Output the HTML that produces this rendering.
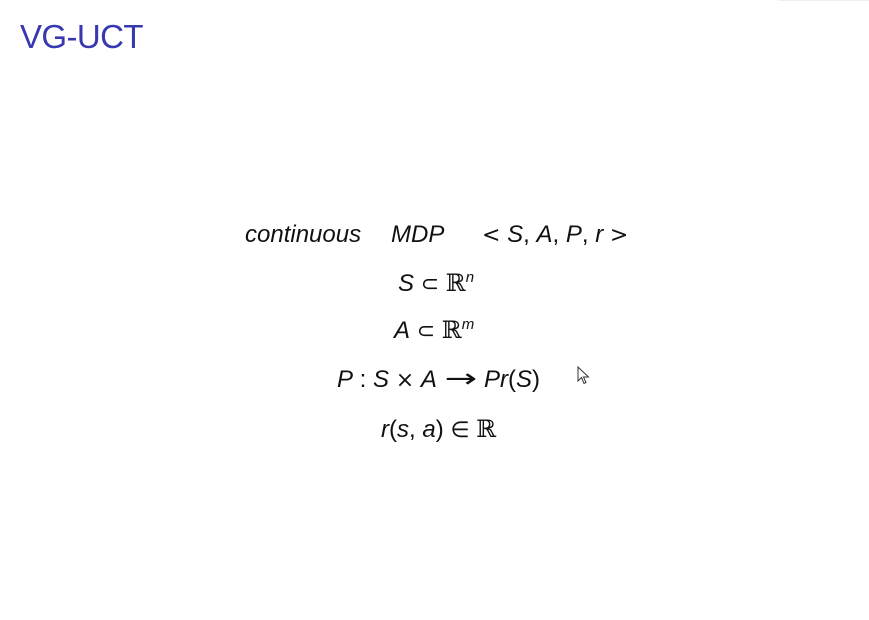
<!DOCTYPE html>
<html><head><meta charset="utf-8"><style>
html,body{margin:0;padding:0;background:#fff;width:869px;height:620px;overflow:hidden;position:relative}
.t{position:absolute;left:20px;top:17px;font-family:"Liberation Sans",sans-serif;font-size:33px;color:#3838b0;line-height:40px;letter-spacing:-0.6px}
.m{position:absolute;font-family:"Liberation Sans",sans-serif;font-size:24px;line-height:24px;color:#111;white-space:nowrap}
i{font-style:italic}
.s{font-family:"DejaVu Sans",sans-serif;font-size:22px}
.bb{font-family:"DejaVu Serif",serif;font-style:normal}
sup{font-size:15px;font-style:italic;vertical-align:9px;line-height:0}
.topbar{position:absolute;right:0;top:0;width:90px;height:1px;background:#eee}
</style></head><body>
<div class="topbar"></div>
<div class="t">VG-UCT</div>
<div class="m" style="left:245px;top:223px"><i>continuous</i></div>
<div class="m" style="left:391px;top:223px"><i>MDP</i></div>
<div class="m" style="left:482px;top:223px"><span class="s">&lt;</span> <i>S</i>, <i>A</i>, <i>P</i>, <i>r</i> <span class="s">&gt;</span></div>
<div class="m" style="left:398px;top:271px"><i>S</i> <span class="s">⊂</span> <span class="bb">ℝ</span><sup>n</sup></div>
<div class="m" style="left:394px;top:318px"><i>A</i> <span class="s">⊂</span> <span class="bb">ℝ</span><sup>m</sup></div>
<div class="m" style="left:337px;top:367px"><i>P</i> : <i>S</i> <span class="s">×</span> <i>A</i> <span class="s" style="font-size:26px;display:inline-block;transform:scaleX(1.5);margin:0 6px">→</span> <i>Pr</i>(<i>S</i>)</div>
<div class="m" style="left:381px;top:417px"><i>r</i>(<i>s</i>, <i>a</i>) <span class="s">∈</span> <span class="bb">ℝ</span></div>
<svg style="position:absolute;left:577px;top:366px" width="14" height="20" viewBox="0 0 14 20">
<path d="M1 1 L1 15 L4.5 11.5 L7 17.5 L9 16.5 L6.5 11 L11.5 11 Z" fill="#fff" stroke="#333" stroke-width="1"/>
</svg>
</body></html>
